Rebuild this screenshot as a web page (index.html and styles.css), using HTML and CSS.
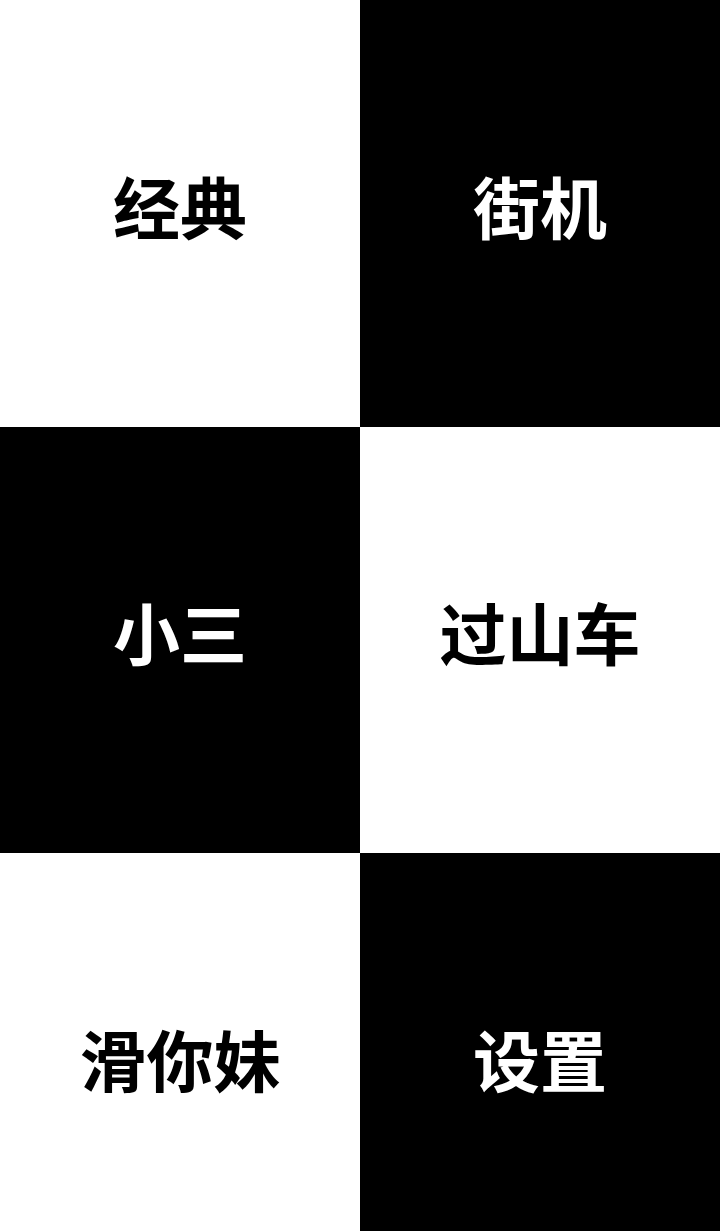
FILE: index.html
```html
<!DOCTYPE html>
<html lang="zh-CN">
<head>
<meta charset="utf-8">
<title>别踩白块</title>
<link rel="stylesheet" href="styles.css">
</head>
<body>
<div class="grid">
  <div class="tile light">经典</div>
  <div class="tile dark">街机</div>
  <div class="tile dark">小三</div>
  <div class="tile light">过山车</div>
  <div class="tile light">滑你妹</div>
  <div class="tile dark">设置</div>
</div>
</body>
</html>
```
FILE: styles.css
```css
html, body {
  margin: 0;
  padding: 0;
  width: 720px;
  height: 1231px;
  overflow: hidden;
  background: #000;
}
.grid {
  display: grid;
  grid-template-columns: 360px 360px;
  grid-auto-rows: 426.67px;
}
.tile {
  display: flex;
  align-items: center;
  justify-content: center;
  font-family: "Noto Sans CJK SC", "Noto Sans", sans-serif;
  font-weight: 700;
  font-size: 67px;
  line-height: 1;
  padding-bottom: 18px;
  box-sizing: border-box;
}
.light {
  background: #fff;
  color: #000;
}
.dark {
  background: #000;
  color: #fff;
}
```
